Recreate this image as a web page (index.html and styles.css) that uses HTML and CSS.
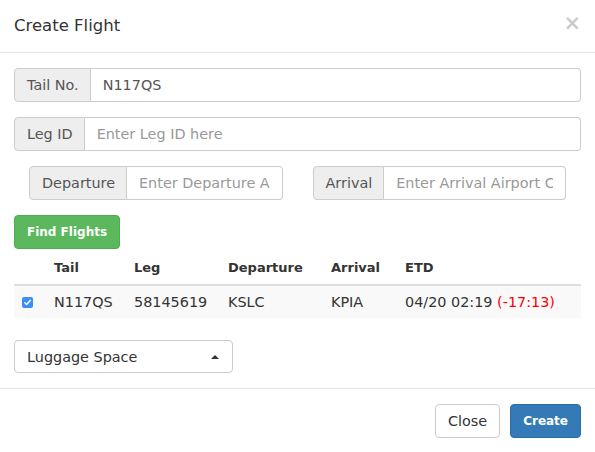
FILE: index.html
```html
<!DOCTYPE html>
<html>
<head>
<meta charset="utf-8">
<link rel="stylesheet" href="styles.css">
</head>
<body>
<div class="modal">
  <div class="modal-header">
    <h4 class="title">Create Flight</h4>
    <span class="close">×</span>
  </div>
  <div class="modal-body">
    <div class="input-group">
      <span class="addon">Tail No.</span>
      <span class="control value">N117QS</span>
    </div>
    <div class="input-group">
      <span class="addon">Leg ID</span>
      <span class="control placeholder">Enter Leg ID here</span>
    </div>
    <div class="row">
      <div class="col">
        <div class="input-group">
          <span class="addon">Departure</span>
          <span class="control placeholder"><span class="clip">Enter Departure Airport Code</span></span>
        </div>
      </div>
      <div class="col">
        <div class="input-group">
          <span class="addon">Arrival</span>
          <span class="control placeholder"><span class="clip">Enter Arrival Airport Code</span></span>
        </div>
      </div>
    </div>
    <div class="btn-row"><span class="btn btn-success">Find Flights</span></div>
    <table class="table">
      <thead>
        <tr>
          <th class="c-check"></th>
          <th class="c-tail">Tail</th>
          <th class="c-leg">Leg</th>
          <th class="c-dep">Departure</th>
          <th class="c-arr">Arrival</th>
          <th class="c-etd">ETD</th>
        </tr>
      </thead>
      <tbody>
        <tr class="striped">
          <td class="c-check"><span class="checkbox"><svg viewBox="0 0 11 11" width="11" height="11"><path d="M2.8 5.7 L4.6 7.5 L8.2 3.4" fill="none" stroke="#fff" stroke-width="1.5" stroke-linecap="round" stroke-linejoin="round"/></svg></span></td>
          <td>N117QS</td>
          <td>58145619</td>
          <td>KSLC</td>
          <td>KPIA</td>
          <td>04/20 02:19 <span class="late">(-17:13)</span></td>
        </tr>
      </tbody>
    </table>
    <div class="select">
      <span>Luggage Space</span>
      <span class="caret"></span>
    </div>
  </div>
  <div class="modal-footer">
    <span class="btn btn-default">Close</span>
    <span class="btn btn-primary">Create</span>
  </div>
</div>
</body>
</html>
```
FILE: styles.css
```css
html, body {
  margin: 0;
  padding: 0;
  background: #fff;
}
body {
  font-family: "DejaVu Sans", Verdana, sans-serif;
  font-size: 14.4px;
  color: #333;
}
.modal {
  width: 595px;
  display: flex;
  flex-direction: column;
}
.modal-header {
  height: 53px;
  flex-shrink: 0;
  box-sizing: border-box;
  border-bottom: 1px solid #e5e5e5;
  padding: 0 14px;
  display: flex;
  align-items: center;
  justify-content: space-between;
}
.title {
  margin: 0;
  font-size: 16.5px;
  font-weight: normal;
  color: #333;
  position: relative;
  top: -1px;
}
.close {
  font-size: 21px;
  font-weight: bold;
  color: #000;
  opacity: 0.2;
  line-height: 1;
  margin-right: 0;
  position: relative;
  top: -3px;
}
.modal-body {
  padding: 15px 14px 15px 14px;
  display: flex;
  flex-direction: column;
  gap: 15px;
  border-bottom: 1px solid #e5e5e5;
}
.input-group {
  display: flex;
  height: 34px;
  flex-shrink: 0;
  box-sizing: border-box;
}
.addon {
  background: #eee;
  border: 1px solid #ccc;
  border-radius: 4px 0 0 4px;
  padding: 0 11px 0 12px;
  display: flex;
  align-items: center;
  white-space: nowrap;
  color: #555;
}
.control {
  flex: 1;
  min-width: 0;
  border: 1px solid #ccc;
  border-left: none;
  border-radius: 0 4px 4px 0;
  padding: 0 12px;
  display: flex;
  align-items: center;
  white-space: nowrap;
  overflow: hidden;
}
.clip {
  display: block;
  overflow: hidden;
  white-space: nowrap;
  min-width: 0;
}
.value { color: #555; }
.placeholder { color: #999; }
.row {
  display: flex;
}
.col {
  flex: 1;
  padding: 0 15px;
  min-width: 0;
}
.btn-row {
  display: flex;
  margin-bottom: -15px;
}
.btn {
  display: inline-flex;
  align-items: center;
  height: 34px;
  box-sizing: border-box;
  padding: 0 12px;
  border: 1px solid transparent;
  border-radius: 4px;
  white-space: nowrap;
}
.btn-success {
  background: #5cb85c;
  border-color: #4cae4c;
  color: #fff;
  font-weight: bold;
  font-size: 12px;
}
.table {
  border-collapse: collapse;
  table-layout: fixed;
  width: 100%;
  margin-bottom: 7px;
}
.table th {
  text-align: left;
  font-weight: bold;
  height: 36px;
  box-sizing: border-box;
  padding: 2px 8px 0 8px;
  border-bottom: 2px solid #ddd;
  vertical-align: middle;
  font-size: 13px;
}
.table td {
  height: 33px;
  box-sizing: border-box;
  padding: 0 8px;
  vertical-align: middle;
  white-space: nowrap;
}
.striped td { background: #f9f9f9; }
.c-check { width: 32px; }
.c-tail { width: 80px; }
.c-leg { width: 94px; }
.c-dep { width: 103px; }
.c-arr { width: 74px; }
.checkbox {
  display: block;
  width: 11px;
  height: 11px;
  border-radius: 2px;
  background: #3a8ef6;
}
.checkbox svg { display: block; }
.late { color: #f00; }
.select {
  width: 219px;
  height: 33px;
  flex-shrink: 0;
  box-sizing: border-box;
  border: 1px solid #ccc;
  border-radius: 4px;
  padding: 0 12px;
  display: flex;
  align-items: center;
  justify-content: space-between;
}
.caret {
  width: 0;
  height: 0;
  border-left: 4px solid transparent;
  border-right: 4px solid transparent;
  border-bottom: 4px solid #333;
  margin-right: 1px;
}
.modal-footer {
  padding: 15px 14px;
  display: flex;
  justify-content: flex-end;
  gap: 10px;
}
.btn-default {
  background: #fff;
  border-color: #ccc;
  color: #333;
}
.btn-primary {
  background: #337ab7;
  border-color: #2e6da4;
  color: #fff;
  font-weight: bold;
  font-size: 12px;
}
```
